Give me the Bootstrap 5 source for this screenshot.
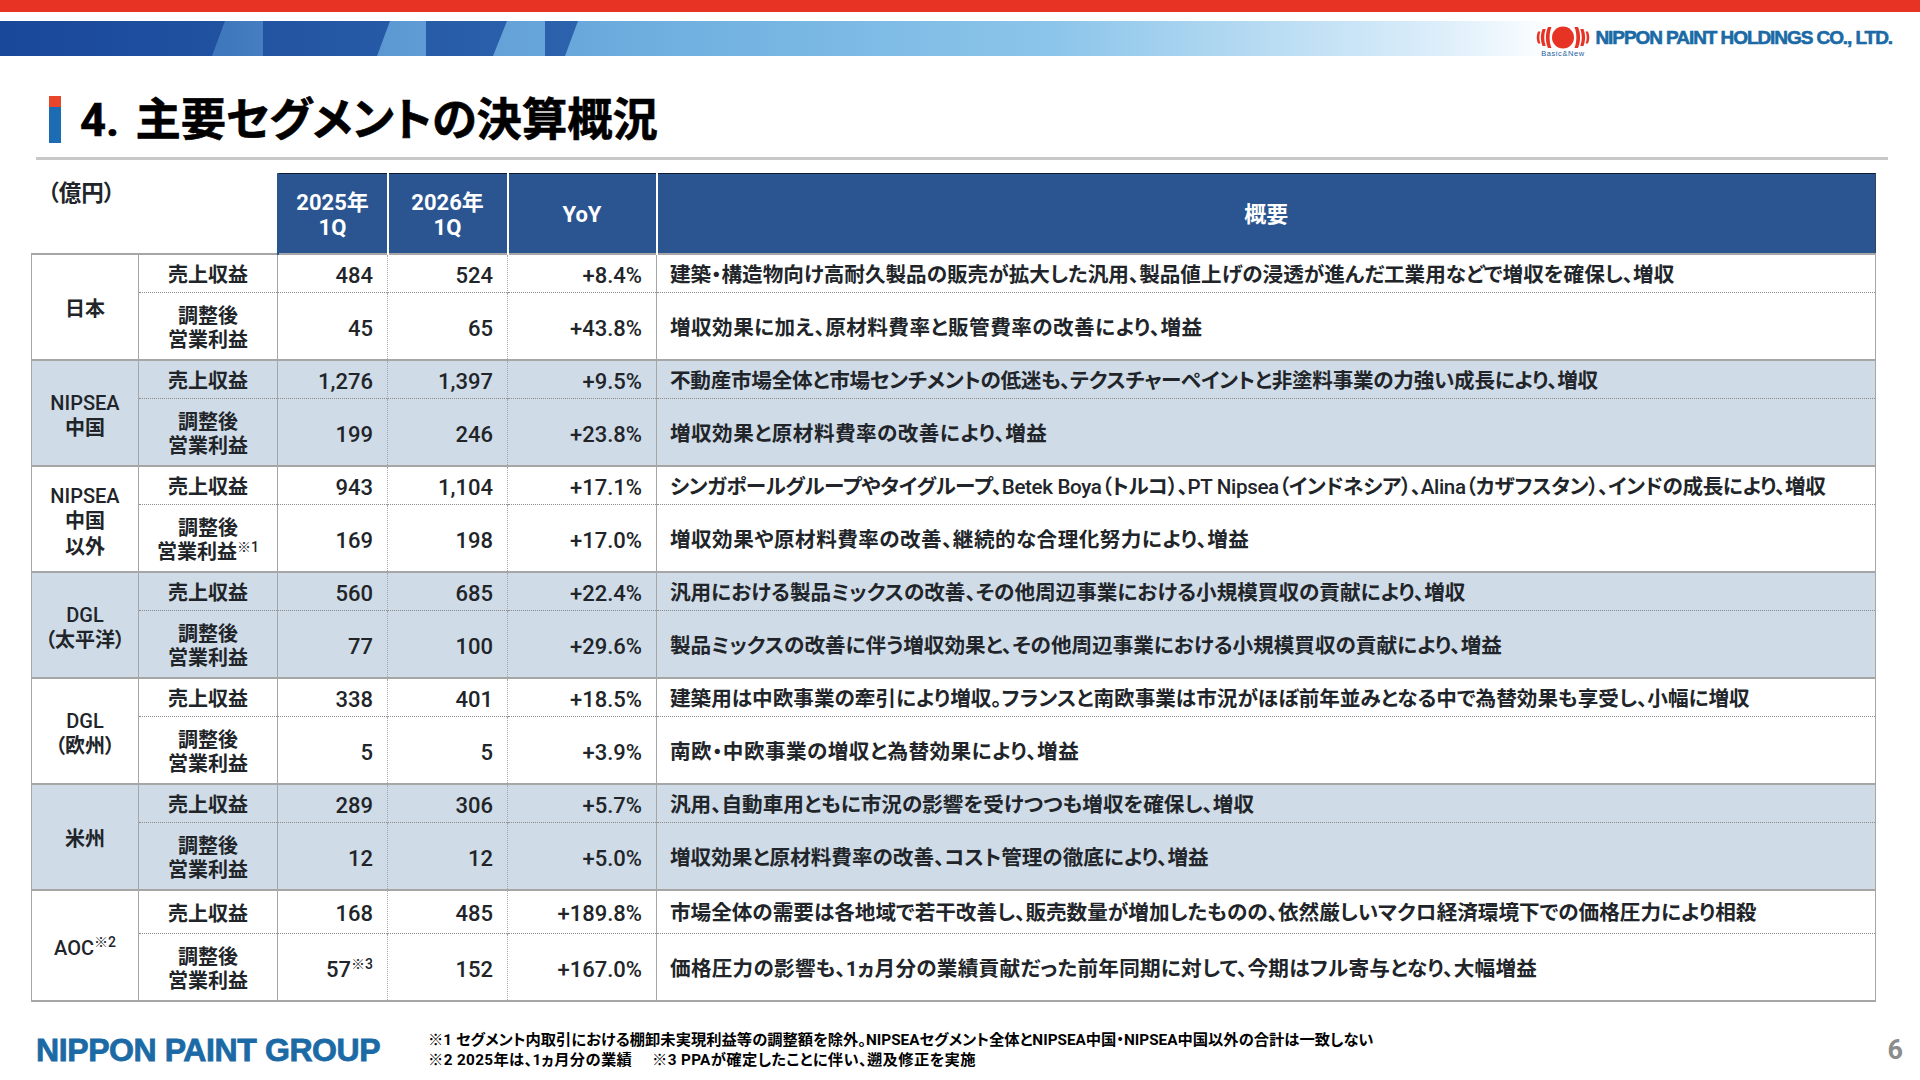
<!DOCTYPE html>
<html lang="ja">
<head>
  <meta charset="UTF-8" />
  <title>4. 主要セグメントの決算概況</title>
  <link href="https://cdn.jsdelivr.net/npm/bootstrap@5.3.3/dist/css/bootstrap.min.css" rel="stylesheet">
  <style>
    html, body {
      height: 100%;
      margin: 0;
      overflow: hidden;
    }

    body {
      width: 1920px;
      height: 1080px;
      background: #fff;
      color: #000;
      font-family: Roboto, "Noto Sans CJK JP", sans-serif;
      font-feature-settings: "palt";
    }

    .top-red { height: 12px; background: #e73323; }

    .banner { height: 35px; margin-top: 9px; }
    .banner svg { display: block; }

    .corp-logo { top: 5px; right: 28px; height: 32px; }
    .corp-name {
      font-family: "Liberation Sans", sans-serif;
      font-weight: 700;
      font-size: 19px;
      letter-spacing: -1.07px;
      color: #1b6aa5;
      -webkit-text-stroke: 0.6px #1b6aa5;
      line-height: 1;
      margin-top: 2px;
    }

    .title-row { margin: 40px 32px 13px 36px; height: 64px; border-bottom: 3px solid #c8c8c8; }
    .title-mark {
      width: 12px;
      height: 47px;
      margin-left: 13px;
      margin-right: 19px;
      background: linear-gradient(#e8452a 0, #e8452a 11px, #1c6cb3 11px);
    }
    .title-row h1 {
      font-size: 45.3px;
      font-weight: 700;
      line-height: 49px;
      margin: 0;
      word-spacing: 5px;
      -webkit-text-stroke: 0.6px #000;
    }

    .result-table {
      width: 1845px;
      margin: 12px 0 0 31px;
      table-layout: fixed;
      border-collapse: collapse;
      --bs-table-bg: transparent;
    }
    .result-table > :not(caption) > * > * {
      padding: 0 14px;
      border: 0;
      vertical-align: middle;
      background: transparent;
      box-shadow: none;
    }

    .c-seg { width: 107px; }
    .c-item { width: 139px; }
    .c-y1 { width: 110px; }
    .c-y2 { width: 120px; }
    .c-yoy { width: 149px; }

    .result-table thead tr { height: 80px; }
    .result-table thead .unit {
      vertical-align: top;
      padding: 4px 0 0 16px;
      font-size: 22.5px;
      font-weight: 700;
      line-height: 30px;
    }
    .result-table thead .hd {
      background: #2a5591;
      color: #fff;
      font-size: 22px;
      font-weight: 700;
      line-height: 25px;
      text-align: center;
      border-top: 1px solid #0d1c30;
      border-left: 2px solid #fff;
      padding: 3px 0 0;
    }
    .result-table thead .hd.first { border-left-color: #2a5591; }
    .result-table thead .hd:last-child { border-right: 1px solid #33415a; }

    .r1 { height: 39px; }
    .r2 { height: 67px; }
    .r1.tall { height: 44px; }

    .result-table tbody td {
      border-left: 1px solid #a6a6a6;
      font-size: 22px;
      font-weight: 500;
    }
    .result-table tbody td:last-child { border-right: 1px solid #a6a6a6; }
    .result-table tbody tr.r1 td { border-top: 2px solid #a6a6a6; padding-top: 4px; }
    .result-table tbody tr.r2 td { border-top: 1px dotted #8c8c8c; padding-top: 5px; }
    .result-table tbody tr:last-child td { border-bottom: 2px solid #a6a6a6; }
    .result-table tbody tr td.seg {
      border-top: 2px solid #a6a6a6;
      border-bottom: 2px solid #a6a6a6;
      font-size: 20px;
      line-height: 25.5px;
      text-align: center;
      padding: 7px 0 0;
    }
    .seg .jp { font-weight: 700; }
    .result-table tbody td.item {
      font-size: 20px;
      font-weight: 700;
      line-height: 24px;
      text-align: center;
      padding-left: 0;
      padding-right: 0;
    }
    .result-table tbody td.num { text-align: right; }
    .result-table tbody td.dot { border-left: 1px dotted #a6a6a6; }
    .result-table tbody td.desc {
      font-size: 20.6px;
      font-weight: 700;
      padding-left: 13px;
      white-space: nowrap;
    }
    .result-table tbody td.desc.tight { letter-spacing: -0.35px; }
    .result-table tbody td.desc.tight-s { letter-spacing: -0.27px; }
    .result-table tbody td.desc.wide { letter-spacing: 0.45px; }
    .result-table tbody td.desc.wide-s { letter-spacing: 0.27px; }
    .desc .lat { font-weight: 500; }
    .result-table tbody tr.alt td,
    .result-table tbody td.alt { background: #cfdbe7; }
    .result-table sup { font-size: 14px; font-weight: 500; top: -0.55em; }

    .foot-row { margin: 28px 17px 0 36px; }
    .group-name {
      width: 392px;
      font-family: "Liberation Sans", sans-serif;
      font-weight: 700;
      font-size: 32px;
      letter-spacing: -0.4px;
      line-height: 1;
      color: #1b6aa5;
      -webkit-text-stroke: 0.8px #1b6aa5;
    }
    .notes { font-size: 15.3px; font-weight: 700; line-height: 20.5px; }
    .notes .second { letter-spacing: 0.35px; }
    .page-no { font-size: 27px; font-weight: 700; color: #8c8c8c; line-height: 1; }
  </style>
</head>
<body>

  <div class="top-red"></div>

  <!-- banner with slanted blue blocks -->
  <div class="banner position-relative">
    <svg width="1920" height="35" viewBox="0 0 1920 35">
      <defs>
        <linearGradient id="light" x1="0" x2="1" y1="0" y2="0">
          <stop offset="0" stop-color="#3c76ba" />
          <stop offset="0.12" stop-color="#3f78bc" />
          <stop offset="0.2" stop-color="#5c98d2" />
          <stop offset="0.35" stop-color="#6fb0e0" />
          <stop offset="0.55" stop-color="#8cc5ea" />
          <stop offset="0.75" stop-color="#dceefa" />
          <stop offset="0.81" stop-color="#ffffff" />
        </linearGradient>
        <linearGradient id="dark" gradientUnits="userSpaceOnUse" x1="0" x2="600" y1="0" y2="0">
          <stop offset="0" stop-color="#19479a" />
          <stop offset="1" stop-color="#2d64ad" />
        </linearGradient>
      </defs>
      <rect width="1920" height="35" fill="url(#light)" />
      <polygon points="0,0 225,0 212,35 0,35" fill="url(#dark)" />
      <polygon points="263,0 390,0 377,35 263,35" fill="url(#dark)" />
      <polygon points="426,0 507,0 493,35 426,35" fill="url(#dark)" />
      <polygon points="545,0 578,0 565,35 545,35" fill="url(#dark)" />
    </svg>

    <div class="corp-logo position-absolute d-flex align-items-start gap-1">
      <svg width="56" height="32" viewBox="0 0 56 32">
        <g fill="#e73323">
          <circle cx="28" cy="11.500" r="11" />
          <path d="M13 1h3.500c-2.500 6.500-2.500 14.500 0 21H13c-2.800-6.500-2.800-14.500 0-21z" />
          <path d="M7.500 3h3.200c-2 5.500-2 11.500 0 17H7.500c-2.200-5.500-2.200-11.500 0-17z" />
          <path d="M3 5.500h2.400c-1.500 4-1.500 8 0 12H3c-1.700-4-1.700-8 0-12z" />
          <path d="M43 1h-3.500c2.500 6.500 2.500 14.500 0 21H43c2.800-6.500 2.800-14.500 0-21z" />
          <path d="M48.500 3h-3.200c2 5.500 2 11.500 0 17h3.200c2.200-5.500 2.200-11.500 0-17z" />
          <path d="M53 5.500h-2.400c1.500 4 1.500 8 0 12H53c1.700-4 1.700-8 0-12z" />
        </g>
        <text x="28" y="30" text-anchor="middle" font-family="Liberation Sans, sans-serif" font-size="7.500" letter-spacing="0.6" fill="#1b5fa0">Basic&amp;New</text>
      </svg>
      <div class="corp-name">NIPPON PAINT HOLDINGS CO., LTD.</div>
    </div>
  </div>

  <div class="title-row d-flex align-items-start">
    <div class="title-mark"></div>
    <h1>4. 主要セグメントの決算概況</h1>
  </div>

  <table class="table result-table">
    <colgroup>
      <col class="c-seg"><col class="c-item"><col class="c-y1"><col class="c-y2"><col class="c-yoy"><col>
    </colgroup>
    <thead>
      <tr>
        <th class="unit" colspan="2">（億円）</th>
        <th class="hd first">2025年<br>1Q</th>
        <th class="hd">2026年<br>1Q</th>
        <th class="hd">YoY</th>
        <th class="hd">概要</th>
      </tr>
    </thead>
    <tbody>
      <tr class="r1">
        <td class="seg" rowspan="2"><span class="jp">日本</span></td>
        <td class="item">売上収益</td>
        <td class="num">484</td><td class="num dot">524</td><td class="num dot">+8.4%</td>
        <td class="desc">建築・構造物向け高耐久製品の販売が拡大した汎用、製品値上げの浸透が進んだ工業用などで増収を確保し、増収</td>
      </tr>
      <tr class="r2">
        <td class="item">調整後<br>営業利益</td>
        <td class="num">45</td><td class="num dot">65</td><td class="num dot">+43.8%</td>
        <td class="desc wide">増収効果に加え、原材料費率と販管費率の改善により、増益</td>
      </tr>

      <tr class="r1 alt">
        <td class="seg alt" rowspan="2">NIPSEA<br><span class="jp">中国</span></td>
        <td class="item">売上収益</td>
        <td class="num">1,276</td><td class="num dot">1,397</td><td class="num dot">+9.5%</td>
        <td class="desc tight-s">不動産市場全体と市場センチメントの低迷も、テクスチャーペイントと非塗料事業の力強い成長により、増収</td>
      </tr>
      <tr class="r2 alt">
        <td class="item">調整後<br>営業利益</td>
        <td class="num">199</td><td class="num dot">246</td><td class="num dot">+23.8%</td>
        <td class="desc wide">増収効果と原材料費率の改善により、増益</td>
      </tr>

      <tr class="r1">
        <td class="seg" rowspan="2">NIPSEA<br><span class="jp">中国<br>以外</span></td>
        <td class="item">売上収益</td>
        <td class="num">943</td><td class="num dot">1,104</td><td class="num dot">+17.1%</td>
        <td class="desc tight">シンガポールグループやタイグループ、<span class="lat">Betek Boya</span>（トルコ）、<span class="lat">PT Nipsea</span>（インドネシア）、<span class="lat">Alina</span>（カザフスタン）、インドの成長により、増収</td>
      </tr>
      <tr class="r2">
        <td class="item">調整後<br>営業利益<sup>※1</sup></td>
        <td class="num">169</td><td class="num dot">198</td><td class="num dot">+17.0%</td>
        <td class="desc wide">増収効果や原材料費率の改善、継続的な合理化努力により、増益</td>
      </tr>

      <tr class="r1 alt">
        <td class="seg alt" rowspan="2">DGL<br><span class="jp">（太平洋）</span></td>
        <td class="item">売上収益</td>
        <td class="num">560</td><td class="num dot">685</td><td class="num dot">+22.4%</td>
        <td class="desc">汎用における製品ミックスの改善、その他周辺事業における小規模買収の貢献により、増収</td>
      </tr>
      <tr class="r2 alt">
        <td class="item">調整後<br>営業利益</td>
        <td class="num">77</td><td class="num dot">100</td><td class="num dot">+29.6%</td>
        <td class="desc">製品ミックスの改善に伴う増収効果と、その他周辺事業における小規模買収の貢献により、増益</td>
      </tr>

      <tr class="r1">
        <td class="seg" rowspan="2">DGL<br><span class="jp">（欧州）</span></td>
        <td class="item">売上収益</td>
        <td class="num">338</td><td class="num dot">401</td><td class="num dot">+18.5%</td>
        <td class="desc">建築用は中欧事業の牽引により増収。フランスと南欧事業は市況がほぼ前年並みとなる中で為替効果も享受し、小幅に増収</td>
      </tr>
      <tr class="r2">
        <td class="item">調整後<br>営業利益</td>
        <td class="num">5</td><td class="num dot">5</td><td class="num dot">+3.9%</td>
        <td class="desc wide">南欧・中欧事業の増収と為替効果により、増益</td>
      </tr>

      <tr class="r1 alt">
        <td class="seg alt" rowspan="2"><span class="jp">米州</span></td>
        <td class="item">売上収益</td>
        <td class="num">289</td><td class="num dot">306</td><td class="num dot">+5.7%</td>
        <td class="desc">汎用、自動車用ともに市況の影響を受けつつも増収を確保し、増収</td>
      </tr>
      <tr class="r2 alt">
        <td class="item">調整後<br>営業利益</td>
        <td class="num">12</td><td class="num dot">12</td><td class="num dot">+5.0%</td>
        <td class="desc">増収効果と原材料費率の改善、コスト管理の徹底により、増益</td>
      </tr>

      <tr class="r1 tall">
        <td class="seg" rowspan="2">AOC<sup>※2</sup></td>
        <td class="item">売上収益</td>
        <td class="num">168</td><td class="num dot">485</td><td class="num dot">+189.8%</td>
        <td class="desc">市場全体の需要は各地域で若干改善し、販売数量が増加したものの、依然厳しいマクロ経済環境下での価格圧力により相殺</td>
      </tr>
      <tr class="r2">
        <td class="item">調整後<br>営業利益</td>
        <td class="num">57<sup>※3</sup></td><td class="num dot">152</td><td class="num dot">+167.0%</td>
        <td class="desc wide-s">価格圧力の影響も、1ヵ月分の業績貢献だった前年同期に対して、今期はフル寄与となり、大幅増益</td>
      </tr>
    </tbody>
  </table>

  <div class="foot-row d-flex align-items-center">
    <div class="group-name">NIPPON PAINT GROUP</div>
    <div class="notes flex-grow-1">
      ※1 セグメント内取引における棚卸未実現利益等の調整額を除外。NIPSEAセグメント全体とNIPSEA中国・NIPSEA中国以外の合計は一致しない<br>
      <span class="second">※2 2025年は、1ヵ月分の業績　 ※3 PPAが確定したことに伴い、遡及修正を実施</span>
    </div>
    <div class="page-no">6</div>
  </div>

  <script src="https://cdn.jsdelivr.net/npm/bootstrap@5.3.3/dist/js/bootstrap.bundle.min.js"></script>
</body>
</html>
